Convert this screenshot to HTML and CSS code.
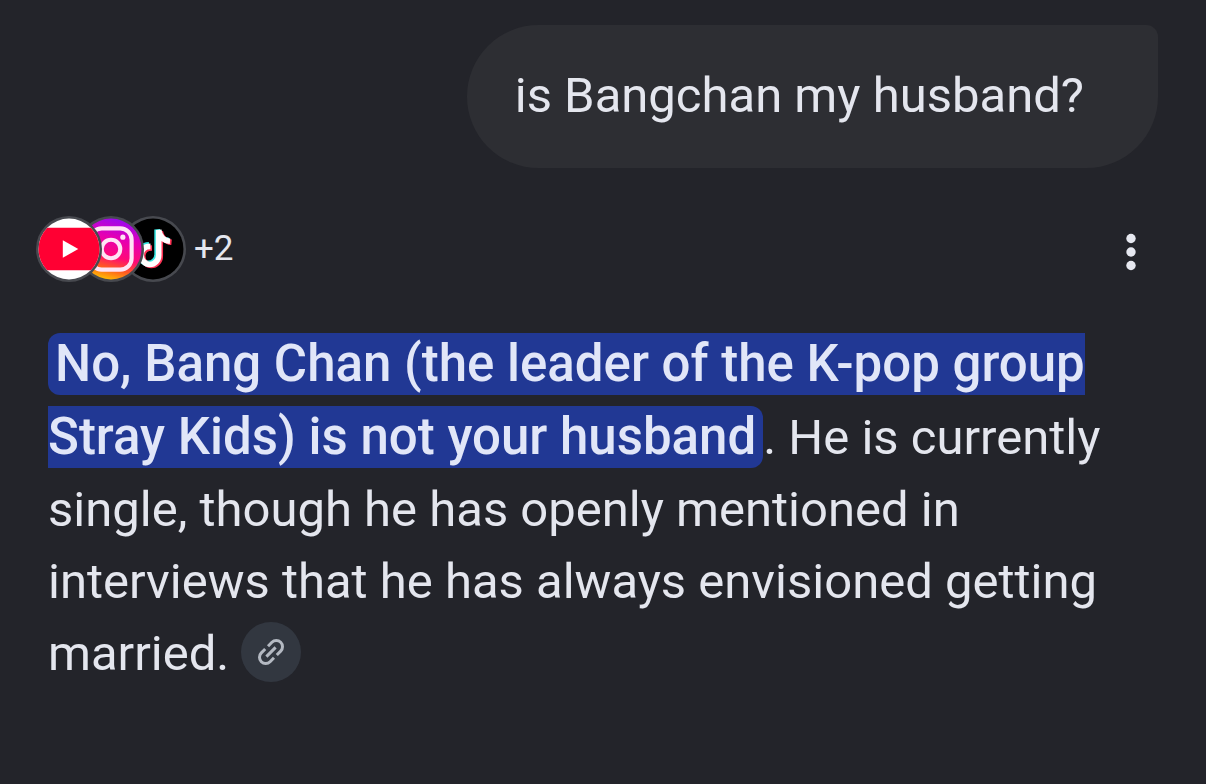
FILE: index.html
```html
<!DOCTYPE html>
<html lang="en">
<head>
<meta charset="utf-8">
<meta name="viewport" content="width=device-width, initial-scale=1">
<title>is Bangchan my husband?</title>
<link rel="stylesheet" href="styles.css">
</head>
<body>
<main class="chat">
  <p class="question">is Bangchan my husband?</p>
  <article class="answer">
    <header class="answer-bar">
      <button class="sources" type="button" aria-label="Show sources">
        <svg class="source source-first" viewBox="0 0 64 64" aria-hidden="true">
          <defs><clipPath id="disc"><circle cx="32" cy="32" r="29.500"/></clipPath></defs>
          <circle cx="32" cy="32" r="32" fill="#47494f"/>
          <g clip-path="url(#disc)">
            <path fill="#fff" d="M0 0h64v64H0z"/>
            <rect x="1" y="11.500" width="62" height="41" rx="4" fill="#ff0033"/>
            <path fill="#fff" d="M26 23.500v17L41 32z"/>
          </g>
        </svg>
        <svg class="source source-second" viewBox="0 0 64 64" aria-hidden="true">
          <defs>
            <linearGradient id="insta" x1="0.600" y1="0" x2="0.350" y2="1">
              <stop offset="0" stop-color="#9a08f0"/>
              <stop offset="0.300" stop-color="#e400b4"/>
              <stop offset="0.600" stop-color="#ff0878"/>
              <stop offset="0.800" stop-color="#ff5a20"/>
              <stop offset="1" stop-color="#ffc400"/>
            </linearGradient>
          </defs>
          <circle cx="32" cy="32" r="32" fill="#47494f"/>
          <circle cx="32" cy="32" r="29.500" fill="url(#insta)"/>
          <g fill="none" stroke="#ffe3f5" stroke-width="4">
            <rect x="12" y="12" width="40" height="40" rx="11"/>
            <circle cx="32" cy="32" r="9"/>
          </g>
          <circle cx="43.500" cy="20.500" r="2.500" fill="#ffe3f5"/>
        </svg>
        <svg class="source source-third" viewBox="0 0 64 64" aria-hidden="true">
          <circle cx="32" cy="32" r="32" fill="#47494f"/>
          <circle cx="32" cy="32" r="29.500" fill="#000"/>
          <g fill="none" stroke-width="5.500">
            <path stroke="#35e4df" d="M28 28c-6 0-9 4-9 9s4 9 8.500 9 8.500-4 8.500-9V13c1 6 5 10 11 10.500"/>
            <path stroke="#ff3355" d="M31 31c-6 0-9 3-9 8s4 9 8.500 9 8.500-4 8.500-9V15c1 6 5 10 11 10.500"/>
            <path stroke="#fff" d="M29.500 29.500c-6 0-9 3.500-9 8.500s4 9 8.500 9 8.500-4 8.500-9V13.500c1 6.500 5 10.500 11 11"/>
          </g>
        </svg>
        <span class="more-sources">+2</span>
      </button>
      <button class="menu" type="button" aria-label="More options">
        <svg viewBox="0 0 48 48" width="48" height="48" aria-hidden="true" fill="#e6e8f0">
          <circle cx="24" cy="10.500" r="4.700"/><circle cx="24" cy="24" r="4.700"/><circle cx="24" cy="37.500" r="4.700"/>
        </svg>
      </button>
    </header>
    <p class="reply"><mark class="key">No, Bang Chan (the leader of the K-pop group<br>Stray Kids) is not your husband</mark>. He is currently<br>single, though he has openly mentioned in<br>interviews that he has always envisioned getting<br>married. <button class="cite" type="button" aria-label="View related links"><svg viewBox="0 0 60 60" width="60" height="60" aria-hidden="true" fill="none" stroke="#b4b9c2" stroke-width="3"><g transform="translate(30 30) rotate(-45)"><path d="M-2 -6.200h-5.500a6.200 6.200 0 0 0 0 12.400h5.500M2 -6.200h5.500a6.200 6.200 0 0 1 0 12.400h-5.500M-6.500 0h13"/></g></svg></button></p>
  </article>
</main>
</body>
</html>
```
FILE: styles.css
```css
* {
  box-sizing: border-box;
}

body {
  margin: 0;
  background: #23242a;
  color: #e4e6ee;
  font-family: Roboto, "Liberation Sans", sans-serif;
  font-size: 49px;
  line-height: 72px;
}

button {
  border: 0;
  padding: 0;
  background: none;
  color: inherit;
  font: inherit;
  cursor: pointer;
}

.chat {
  display: flex;
  flex-direction: column;
  gap: 49px;
  padding: 25px 48px;
}

.question {
  align-self: flex-end;
  margin: 0;
  padding: 35px 74px 36px 48px;
  border-radius: 72px 12px 72px 72px;
  background: #2d2e33;
}

.answer-bar {
  display: flex;
  align-items: center;
  justify-content: space-between;
  height: 64px;
  margin-bottom: 47px;
}

.sources {
  display: flex;
  align-items: center;
  margin-left: -12px;
}

.source {
  position: relative;
  width: 66px;
  height: 66px;
  margin-right: -24px;
}

.source-first {
  z-index: 3;
}

.source-second {
  z-index: 2;
}

.source-third {
  z-index: 1;
}

.more-sources {
  margin-left: 32px;
  font-size: 35px;
  line-height: 48px;
}

.menu {
  display: flex;
  margin: 6px 3px 0 0;
}

.reply {
  margin: 0;
}

.key {
  padding: 1px 7px 2px;
  border-radius: 12px;
  background: #213894;
  color: #e1e6f8;
  font-size: 51px;
  font-weight: 500;
}

.cite {
  display: inline-flex;
  vertical-align: -12px;
  border-radius: 50%;
  background: #323740;
}
```
